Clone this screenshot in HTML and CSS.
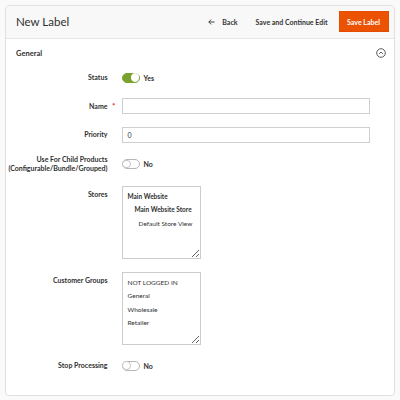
FILE: index.html
```html
<!DOCTYPE html>
<html lang="en">
<head>
<meta charset="utf-8">
<title>New Label</title>
<link rel="stylesheet" href="styles.css">
</head>
<body>
<div class="card">
  <header class="top">
    <h1 class="title">New Label</h1>
    <div class="actions">
      <a class="back"><svg class="arrow" width="7" height="6" viewBox="0 0 7 6"><path d="M6.6 3H0.8M3.2 0.6L0.8 3L3.2 5.4" fill="none" stroke="#333" stroke-width="0.9"/></svg>Back</a>
      <a class="secondary">Save and Continue Edit</a>
      <button class="primary">Save Label</button>
    </div>
  </header>
  <section class="section">
    <div class="section-head">
      <span class="section-title">General</span>
      <svg class="collapse" width="10" height="10" viewBox="0 0 10 10"><circle cx="5" cy="5" r="4.3" fill="none" stroke="#333" stroke-width="0.8"/><path d="M3.1 5.9L5 4L6.9 5.9" fill="none" stroke="#333" stroke-width="0.8"/></svg>
    </div>
    <div class="form">
      <div class="row">
        <span class="lbl">Status</span><span class="mark"></span>
        <div class="ctrl"><span class="switch on"><span class="knob"></span></span><span class="sw-text">Yes</span></div>
      </div>
      <div class="row">
        <span class="lbl">Name</span><span class="mark">*</span>
        <div class="ctrl"><span class="input"></span></div>
      </div>
      <div class="row">
        <span class="lbl">Priority</span><span class="mark"></span>
        <div class="ctrl"><span class="input">0</span></div>
      </div>
      <div class="row">
        <span class="lbl">Use For Child Products<br>(Configurable/Bundle/Grouped)</span><span class="mark"></span>
        <div class="ctrl"><span class="switch"><span class="knob"></span></span><span class="sw-text">No</span></div>
      </div>
      <div class="row top-row">
        <span class="lbl pad">Stores</span><span class="mark"></span>
        <div class="ctrl"><div class="listbox">
          <div class="opt bold">Main Website</div>
          <div class="opt bold lvl1">Main Website Store</div>
          <div class="opt lvl2">Default Store View</div>
        </div></div>
      </div>
      <div class="row top-row">
        <span class="lbl pad">Customer Groups</span><span class="mark"></span>
        <div class="ctrl"><div class="listbox">
          <div class="opt">NOT LOGGED IN</div>
          <div class="opt">General</div>
          <div class="opt">Wholesale</div>
          <div class="opt">Retailer</div>
        </div></div>
      </div>
      <div class="row">
        <span class="lbl">Stop Processing</span><span class="mark"></span>
        <div class="ctrl"><span class="switch"><span class="knob"></span></span><span class="sw-text">No</span></div>
      </div>
    </div>
  </section>
</div>
</body>
</html>
```
FILE: styles.css
```css
* { box-sizing: border-box; }
html, body { margin: 0; }
body {
  background: #fafafa;
  padding: 4.5px 5.5px 5px 4.5px;
  font-family: Lato, "Liberation Sans", sans-serif;
  color: #303030;
}
.card {
  height: 391px;
  background: #fff;
  border: 1px solid #e1e1e1;
  border-radius: 4px;
  overflow: hidden;
}
.top {
  height: 33px;
  background: #f8f8f8;
  border-bottom: 1px solid #e6e6e6;
  display: flex;
  align-items: center;
  justify-content: space-between;
  padding: 0 5px 0 10.5px;
}
.title {
  margin: 0;
  font-size: 11.5px;
  font-weight: 400;
  color: #303030;
}
.actions {
  display: flex;
  align-items: center;
  font-size: 7px;
  font-weight: 700;
  color: #333;
}
.back { display: flex; align-items: center; }
.arrow { margin-right: 7px; }
.secondary { margin-left: 18px; }
.primary {
  margin-left: 11px;
  height: 21px;
  padding: 0 7.5px;
  background: #eb5202;
  border: 1px solid #e24d00;
  color: #fff;
  font-family: inherit;
  font-size: 7px;
  font-weight: 700;
}
.section { padding: 9.5px 8px 0 10.5px; }
.section-head {
  display: flex;
  align-items: center;
  justify-content: space-between;
  height: 10px;
}
.section-title { font-size: 7.5px; font-weight: 700; color: #303030; }
.form {
  display: flex;
  flex-direction: column;
  gap: 12.5px;
  margin-top: 11.5px;
  margin-left: -10.5px;
  padding-right: 15px;
}
.row {
  display: grid;
  grid-template-columns: 102px 14px 1fr;
  align-items: center;
  min-height: 16px;
}
.row.top-row { align-items: start; }
.lbl {
  text-align: right;
  font-size: 7px;
  font-weight: 700;
  line-height: 9px;
  color: #303030;
}
.lbl.pad { padding-top: 4px; }
.mark {
  color: #e22626;
  font-size: 8px;
  font-weight: 700;
  padding-left: 4.5px;
  line-height: 9px;
}
.ctrl { display: flex; align-items: center; }
.input {
  display: flex;
  align-items: center;
  width: 248px;
  height: 16px;
  border: 1px solid #cfcfcf;
  padding-left: 5px;
  font-size: 7px;
  color: #303030;
  background: #fff;
}
.switch {
  display: flex;
  align-items: center;
  justify-content: flex-start;
  width: 18px;
  height: 10px;
  border-radius: 5px;
  border: 1px solid #b5b5b5;
  background: #fff;
}
.switch.on { justify-content: flex-end; background: #79a22e; border-color: #79a22e; }
.knob {
  width: 8.5px;
  height: 8.5px;
  border-radius: 50%;
  background: #fff;
  border: 0.7px solid #c4c4c4;
  margin: 0 -0.5px;
}
.switch.on .knob { border-color: #fff; }
.sw-text { margin-left: 4px; font-size: 7px; font-weight: 700; color: #303030; }
.listbox {
  width: 79px;
  height: 73.5px;
  border: 1px solid #cccccc;
  padding: 3px 0 0 5px;
  resize: both;
  overflow: auto;
}
.opt { font-size: 6.5px; line-height: 13.6px; color: #303030; white-space: nowrap; }
.opt.bold { font-weight: 700; }
.opt.lvl1 { padding-left: 7px; }
.opt.lvl2 { padding-left: 11px; }
```
